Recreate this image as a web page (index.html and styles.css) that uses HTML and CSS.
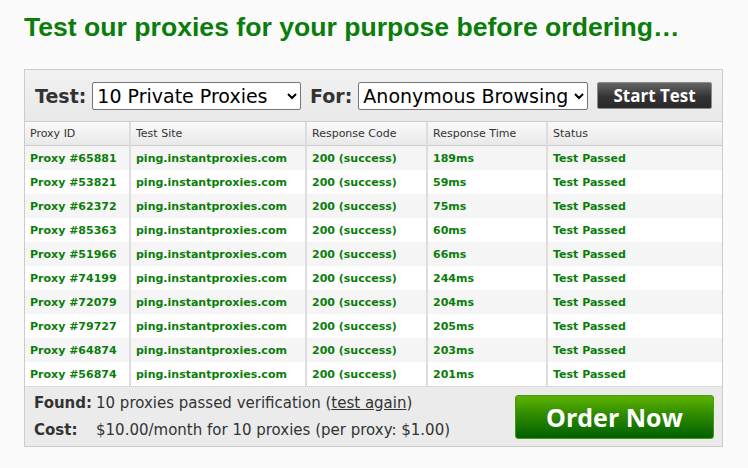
FILE: index.html
```html
<!DOCTYPE html>
<html lang="en">
<head>
    <meta charset="UTF-8">
    <title>Test our proxies</title>
    <link rel="stylesheet" href="styles.css">
</head>
<body>

<h1 class="page-title">Test our proxies for your purpose before ordering&hellip;</h1>

<div class="tester">
    <div class="toolbar">
        <label class="tool-label">Test:</label>
        <select class="tool-select select-count">
            <option>10 Private Proxies</option>
        </select>
        <label class="tool-label">For:</label>
        <select class="tool-select select-purpose">
            <option>Anonymous Browsing</option>
        </select>
        <button class="btn-start">Start Test</button>
    </div>

    <table class="results">
        <thead>
            <tr>
                <th class="col-id">Proxy ID</th>
                <th class="col-site">Test Site</th>
                <th class="col-code">Response Code</th>
                <th class="col-time">Response Time</th>
                <th class="col-status">Status</th>
            </tr>
        </thead>
        <tbody>
            <tr><td>Proxy #65881</td><td>ping.instantproxies.com</td><td>200 (success)</td><td>189ms</td><td>Test Passed</td></tr>
            <tr><td>Proxy #53821</td><td>ping.instantproxies.com</td><td>200 (success)</td><td>59ms</td><td>Test Passed</td></tr>
            <tr><td>Proxy #62372</td><td>ping.instantproxies.com</td><td>200 (success)</td><td>75ms</td><td>Test Passed</td></tr>
            <tr><td>Proxy #85363</td><td>ping.instantproxies.com</td><td>200 (success)</td><td>60ms</td><td>Test Passed</td></tr>
            <tr><td>Proxy #51966</td><td>ping.instantproxies.com</td><td>200 (success)</td><td>66ms</td><td>Test Passed</td></tr>
            <tr><td>Proxy #74199</td><td>ping.instantproxies.com</td><td>200 (success)</td><td>244ms</td><td>Test Passed</td></tr>
            <tr><td>Proxy #72079</td><td>ping.instantproxies.com</td><td>200 (success)</td><td>204ms</td><td>Test Passed</td></tr>
            <tr><td>Proxy #79727</td><td>ping.instantproxies.com</td><td>200 (success)</td><td>205ms</td><td>Test Passed</td></tr>
            <tr><td>Proxy #64874</td><td>ping.instantproxies.com</td><td>200 (success)</td><td>203ms</td><td>Test Passed</td></tr>
            <tr><td>Proxy #56874</td><td>ping.instantproxies.com</td><td>200 (success)</td><td>201ms</td><td>Test Passed</td></tr>
        </tbody>
    </table>

    <div class="summary">
        <div class="summary-text">
            <p><b>Found:</b>10 proxies passed verification (<a href="#">test again</a>)</p>
            <p><b>Cost:</b>$10.00/month for 10 proxies (per proxy: $1.00)</p>
        </div>
        <a class="btn-order" href="#">Order Now</a>
    </div>
</div>

</body>
</html>
```

FILE: styles.css
```css
body {
    margin: 0;
    padding: 0 24px;
    background-color: #fbfbfb;
    font-family: "DejaVu Sans", Verdana, sans-serif;
    color: #333;
}

.page-title {
    margin: 0;
    padding: 12px 0 0;
    height: 69px;
    box-sizing: border-box;
    font-family: "Liberation Sans", Arial, sans-serif;
    font-size: 26.6px;
    font-weight: bold;
    color: #0a7d0a;
}

.tester {
    width: 699px;
    box-sizing: border-box;
    border: 1px solid #ccc;
    background-color: #ececec;
}

.toolbar {
    display: flex;
    align-items: center;
    height: 51px;
    padding: 0 10px;
    border-bottom: 1px solid #ccc;
    background: linear-gradient(#f2f2f2, #e9e9e9);
}

.tool-label {
    font-size: 19px;
    font-weight: bold;
    color: #333;
    margin-right: 6px;
}

.tool-select {
    height: 28px;
    font-family: "DejaVu Sans", Verdana, sans-serif;
    font-size: 19px;
    color: #000;
    background-color: #fff;
    border: 1px solid #767676;
    border-radius: 2px;
    margin-right: 9px;
}

.select-count {
    width: 209px;
}

.select-purpose {
    width: 230px;
}

.btn-start {
    width: 115px;
    height: 27px;
    padding: 0;
    font-family: "Open Sans", sans-serif;
    font-size: 17px;
    font-weight: bold;
    color: #fff;
    border: 1px solid #8a8a8a;
    border-radius: 2px;
    background: linear-gradient(#666, #333 55%, #2a2a2a);
}

.results {
    width: 100%;
    border-collapse: collapse;
    font-size: 11px;
}

.results th {
    height: 23px;
    padding: 0 5px;
    text-align: left;
    font-weight: normal;
    color: #333;
    border-left: 2px solid #ddd;
    border-bottom: 1px solid #ccc;
    background: linear-gradient(#fafafa, #e9e9e9);
}

.results td {
    height: 24px;
    padding: 0 5px;
    font-weight: bold;
    color: #0a7d0a;
    border-left: 2px solid #ddd;
}

.results th:first-child,
.results td:first-child {
    border-left: none;
}

.results tbody tr:nth-child(odd) td {
    background-color: #f5f5f5;
}

.results tbody tr:nth-child(even) td {
    background-color: #fff;
}

.col-id { width: 94px; }
.col-site { width: 164px; }
.col-code { width: 109px; }
.col-time { width: 108px; }

.summary {
    display: flex;
    align-items: center;
    justify-content: space-between;
    height: 59px;
    padding: 0 8px 0 9px;
    border-top: 1px dotted #ccc;
    background-color: #ebebeb;
}

.summary-text p {
    margin: 0;
    font-size: 15px;
    line-height: 27px;
    color: #333;
}

.summary-text b {
    display: inline-block;
    width: 62px;
}

.summary-text a {
    color: #333;
}

.btn-order {
    display: block;
    width: 197px;
    height: 42px;
    line-height: 42px;
    text-align: center;
    text-decoration: none;
    font-family: "Open Sans", sans-serif;
    font-size: 25px;
    font-weight: bold;
    color: #fff;
    border: 1px solid #4a9a10;
    border-radius: 3px;
    background: linear-gradient(#5cb300, #2f8a00 45%, #006000);
}
```
